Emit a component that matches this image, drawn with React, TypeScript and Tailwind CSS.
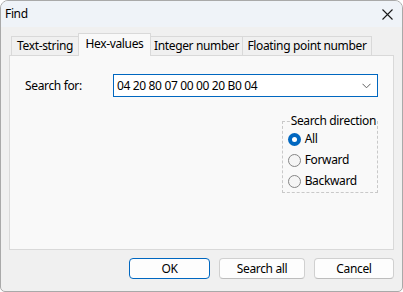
import { useState } from 'react';

const tabs = [
  { label: 'Text-string', w: 'w-[68px]' },
  { label: 'Hex-values', w: 'w-[73px]' },
  { label: 'Integer number', w: 'w-[93px]' },
  { label: 'Floating point number', w: 'w-[130px]' },
];

const directions = ['All', 'Forward', 'Backward'];

export default function App() {
  const [active, setActive] = useState(1);
  const [dir, setDir] = useState('All');

  return (
    <div
      className="w-[403px] h-[292px] flex flex-col bg-[#f0f0f0] border border-[#a9a9a9] rounded-t-[8px] rounded-b-[5px] overflow-hidden text-[12px] tracking-[-0.35px] text-black"
      style={{ fontFamily: '"Segoe UI", "Noto Sans", sans-serif' }}
    >
      {/* Title bar */}
      <div className="h-[26px] flex items-center justify-between pl-[4px] pr-[9px] bg-[#eff3f8]">
        <span className="leading-none">Find</span>
        <svg width="11" height="11" viewBox="0 0 11 11" className="mt-[1px]">
          <path d="M0.5 0.5L10.5 10.5M10.5 0.5L0.5 10.5" stroke="#1a1a1a" strokeWidth="1.1" fill="none" />
        </svg>
      </div>

      {/* Tabs + panel */}
      <div className="mt-[6px] mx-[8px]">
        <div className="flex items-end h-[22px] pl-[2px]">
          {tabs.map((t, i) =>
            i === active ? (
              <button
                key={t.label}
                onClick={() => setActive(i)}
                className={`${t.w} relative z-10 -ml-px -mb-px h-[23px] bg-[#f9f9f9] border border-b-0 border-[#d9d9d9] flex items-start justify-center pt-[3px] leading-[14px] whitespace-nowrap`}
              >
                {t.label}
              </button>
            ) : (
              <button
                key={t.label}
                onClick={() => setActive(i)}
                className={`${t.w} -ml-px first:ml-0 h-[19px] bg-[#f0f0f0] border border-b-0 border-[#d9d9d9] flex items-start justify-center pt-[2px] leading-[14px] whitespace-nowrap`}
              >
                {t.label}
              </button>
            )
          )}
        </div>

        <div className="h-[195px] bg-[#f9f9f9] border border-[#d9d9d9] pt-[18px] pl-[15px] pr-[14px]">
          <div className="flex items-center">
            <span className="w-[88px]">Search for:</span>
            <div className="w-[265px] h-[23px] bg-white border border-[#0067c0] flex items-center justify-between pl-[3px] pr-[6px]">
              <span>04 20 80 07 00 00 20 B0 04</span>
              <svg width="9" height="6" viewBox="0 0 9 6">
                <path d="M0.5 0.8L4.5 4.8L8.5 0.8" stroke="#5f5f5f" strokeWidth="1" fill="none" />
              </svg>
            </div>
          </div>

          <div className="flex justify-end mt-[17px] pr-[1px]">
            <fieldset className="w-[96px] h-[79px] border border-dashed border-[#c9c9c9] pl-[5px]">
              <legend className="ml-[2px] px-[1px] leading-[14px] whitespace-nowrap">Search direction</legend>
              <div className="flex flex-col gap-[7px] mt-[4px]">
                {directions.map((d) => (
                  <label key={d} className="flex items-center gap-[4px] leading-[14px] cursor-default" onClick={() => setDir(d)}>
                    {dir === d ? (
                      <span className="w-[13px] h-[13px] rounded-full bg-[#0067c0] flex items-center justify-center">
                        <span className="w-[5px] h-[5px] rounded-full bg-white" />
                      </span>
                    ) : (
                      <span className="w-[13px] h-[13px] rounded-full bg-[#f5f5f5] border border-[#858585]" />
                    )}
                    <span>{d}</span>
                  </label>
                ))}
              </div>
            </fieldset>
          </div>
        </div>
      </div>

      {/* Buttons */}
      <div className="flex justify-end gap-[9px] mt-[8px] pr-[8px]">
        <button className="w-[81px] h-[21px] rounded-[4px] bg-[#fdfdfd] border border-[#0067c0] leading-none">OK</button>
        <button className="w-[86px] h-[21px] rounded-[4px] bg-[#fdfdfd] border border-[#d0d0d0] border-b-[#bdbdbd] leading-none">Search all</button>
        <button className="w-[80px] h-[21px] rounded-[4px] bg-[#fdfdfd] border border-[#d0d0d0] border-b-[#bdbdbd] leading-none">Cancel</button>
      </div>
    </div>
  );
}
